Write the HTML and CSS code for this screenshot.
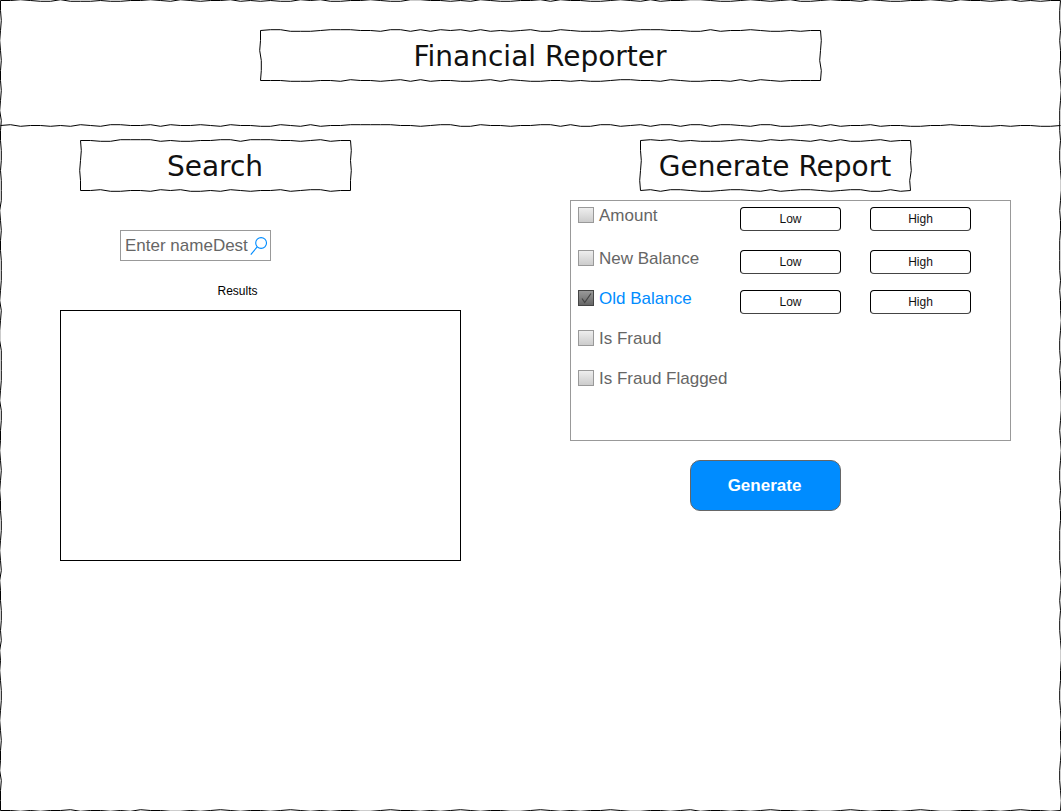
FILE: index.html
```
<!DOCTYPE html>
<html lang="en">
<head>
<meta charset="utf-8">
<title>Financial Reporter</title>
<link rel="stylesheet" href="styles.css">
</head>
<body>
<div class="page">
  <svg class="sketch" data-w="1060" data-h="810" data-top=".^.vv^vvv.vv..^.v^.v..^v.v.vv^.^vv..^.vv^^..v.v^.vv..^v^..vv.^.v^v..^^.vv.^.v.^vv.^..v^.vv..^.v^..v.^v.v.." data-right="^^.^..^.v.^^^.^^.vv.^..^^^^.^..v.^^.^..vv.^.v.^^.^..^^^^.v.^.^^.vv..^^.v..v.^^.v" data-bottom=".v.v..^v..v.v^..vv.v.^.v..v.^.v.v..vv.^..v.v.^.v..vv.^.v.v..^.vv..v.^v..v.v.^..v.vv.^.v..v.^.vv..v.v.^..v" data-left=".v.^.v..v.^v..vv.vvv^.v..vvv.^v.^^vvvv.^vv..^.v.^..vv.^.v^..vv.v^.^.vv.^.v..^v"></svg>
  <header class="masthead">
    <h1 class="title title-wide"><svg class="sketch" data-w="560" data-h="50" data-top="^^vvv.^^^..v^^v^v^.^v^v.v.^vv^.vvv.v.^^^..vv^v..^.vv.v" data-right="v.^v^" data-bottom="..vvv..v^..v.^v^v..vv.^v^.vv..v.vv.^^..v^.vv..v^v^.v." data-left=".^vv."></svg><span>Financial Reporter</span></h1>
    <svg class="sketch divider" data-w="1060" data-line="^v..v.v^.v^^..^v^..^.v^..vv^.v^v..^^^^^..v.^^vv^..v..^^v^vv^^v.^v^^v^^v^^.v^^vv.^v^v..^v..vv..^..vv.v..vvv"></svg>
  </header>
  <main class="columns">
    <section class="search">
      <h2 class="title"><svg class="sketch" data-w="270" data-h="50" data-top=".vv^^^^v.vv..^^v^^^..v.^v." data-right="v.v." data-bottom=".^vv..v^.^vv.v^.v..^v.^^v." data-left="v.^."></svg><span>Search</span></h2>
      <label class="field"><span>Enter nameDest</span>
        <svg class="lens" viewBox="0 0 18 20"><circle cx="11.1" cy="7" r="5.4"/><path d="M7.2 10.8 .8 18.6"/></svg>
      </label>
      <p class="caption">Results</p>
      <div class="results"></div>
    </section>
    <section class="report">
      <h2 class="title"><svg class="sketch" data-w="270" data-h="50" data-top="^.^v.vvv.^.v^.^.v^v^vv.^v." data-right="v.v^" data-bottom="^v^^.vv.^^.v^v.^^.v.^^vv^v" data-left=".v.^"></svg><span>Generate Report</span></h2>
      <div class="criteria">
        <div class="row row-first"><label class="option"><i class="box"></i>Amount</label><button class="range">Low</button><button class="range">High</button></div>
        <div class="row"><label class="option"><i class="box"></i>New Balance</label><button class="range">Low</button><button class="range">High</button></div>
        <div class="row"><label class="option checked"><i class="box"><svg class="tick" viewBox="0 0 14 14"><path d="M3 7.5 5.7 11.5 12 2.5"/></svg></i>Old Balance</label><button class="range">Low</button><button class="range">High</button></div>
        <div class="row"><label class="option"><i class="box"></i>Is Fraud</label></div>
        <div class="row"><label class="option"><i class="box"></i>Is Fraud Flagged</label></div>
      </div>
      <button class="generate">Generate</button>
    </section>
  </main>
</div>
<script src="sketch.js"></script>
</body>
</html>
```
FILE: styles.css
```
* { box-sizing: border-box; }
body { margin: 0; background: #fff; font-family: "Liberation Sans", Arial, sans-serif; }
.page { position: relative; width: 1061px; height: 811px; overflow: hidden; }
.sketch { position: absolute; left: 0; top: 0; width: 100%; height: 100%; overflow: visible; pointer-events: none; }
.sketch path { fill: none; stroke: #000; stroke-width: 1; }
.masthead { position: relative; height: 140px; padding-top: 30px; }
.divider { top: 125px; height: 1px; }
.title { position: relative; display: flex; justify-content: center; width: 271px; height: 51px; margin: 0; padding-right: 1px; color: #111; font: 400 28px/54px "DejaVu Sans", sans-serif; white-space: nowrap; }
.title-wide { width: 561px; margin-left: 260px; }
.columns { display: flex; }
.search { width: 570px; padding-left: 60px; }
.search .title { margin-left: 20px; }
.field { display: flex; justify-content: space-between; align-items: center; width: 151px; height: 31px; margin: 39px 0 0 60px; padding: 0 2px 0 4px; border: 1px solid #999; color: #666; font-size: 17px; white-space: nowrap; }
.lens { flex: none; width: 18px; height: 20px; }
.lens circle, .lens path { fill: none; stroke: #008cff; stroke-width: 1.1; }
.caption { width: 355px; margin: 23px 0 11px; text-align: center; font-size: 12px; line-height: 15px; }
.results { width: 401px; height: 251px; border: 1px solid #000; }
.report { width: 441px; }
.report .title { margin-left: 70px; }
.criteria { width: 441px; height: 241px; margin-top: 9px; padding: 6px 0 0 7px; border: 1px solid #999; }
.row { display: grid; grid-template-columns: 162px 130px 101px; height: 40px; align-items: start; }
.row-first { height: 43px; }
.option { display: flex; gap: 5px; height: 16px; color: #666; font-size: 17px; line-height: 18px; white-space: nowrap; }
.box { display: block; width: 16px; height: 16px; border: 1px solid #999; background: linear-gradient(#eee, #ccc); }
.checked { color: #008cff; }
.checked .box { border-color: #444; background: linear-gradient(#999, #666); }
.tick { display: block; width: 14px; height: 14px; }
.tick path { fill: none; stroke: #444; stroke-width: 1.2; }
.range { width: 101px; height: 24px; padding: 0; border: 1px solid #000; border-bottom-color: #444; border-radius: 4px; background: #fff; color: #111; font: 12px/22px "Liberation Sans", Arial, sans-serif; }
.row-first .range { padding-top: 1px; line-height: 21px; }
.generate { display: block; width: 151px; height: 51px; margin: 19px 0 0 120px; padding: 0 2px 0 0; border: 1px solid #666; border-radius: 10px; background: #008cff; color: #fff; font: 700 17px/49px "Liberation Sans", Arial, sans-serif; }
```
FILE: sketch.js
```
// Hand-drawn strokes: one character per 10px step, ^ and v bend the line either way.
const BEND = { '^': -0.8, '.': 0, 'v': 0.8 };

function side(marks, length, place) {
  const points = [];
  for (let i = 1; i * 10 < length; i++) points.push(place(i * 10, BEND[marks[i - 1]] || 0));
  return points;
}

document.querySelectorAll('.sketch').forEach((svg) => {
  const d = svg.dataset, w = +d.w, h = +d.h;
  let points, close = '';
  if (d.line) {
    points = [[0, 0], ...side(d.line, w, (t, b) => [t, b]), [w, 0]];
  } else {
    points = [
      [0, 0], ...side(d.top, w, (t, b) => [t, b]),
      [w, 0], ...side(d.right, h, (t, b) => [w + b, t]),
      [w, h], ...side(d.bottom, w, (t, b) => [t, h + b]).reverse(),
      [0, h], ...side(d.left, h, (t, b) => [b, t]).reverse()
    ];
    close = 'Z';
  }
  const path = document.createElementNS('http://www.w3.org/2000/svg', 'path');
  path.setAttribute('d', 'M' + points.map(([x, y]) => (x + 0.5) + ' ' + (y + 0.5)).join('L') + close);
  svg.appendChild(path);
});
```
